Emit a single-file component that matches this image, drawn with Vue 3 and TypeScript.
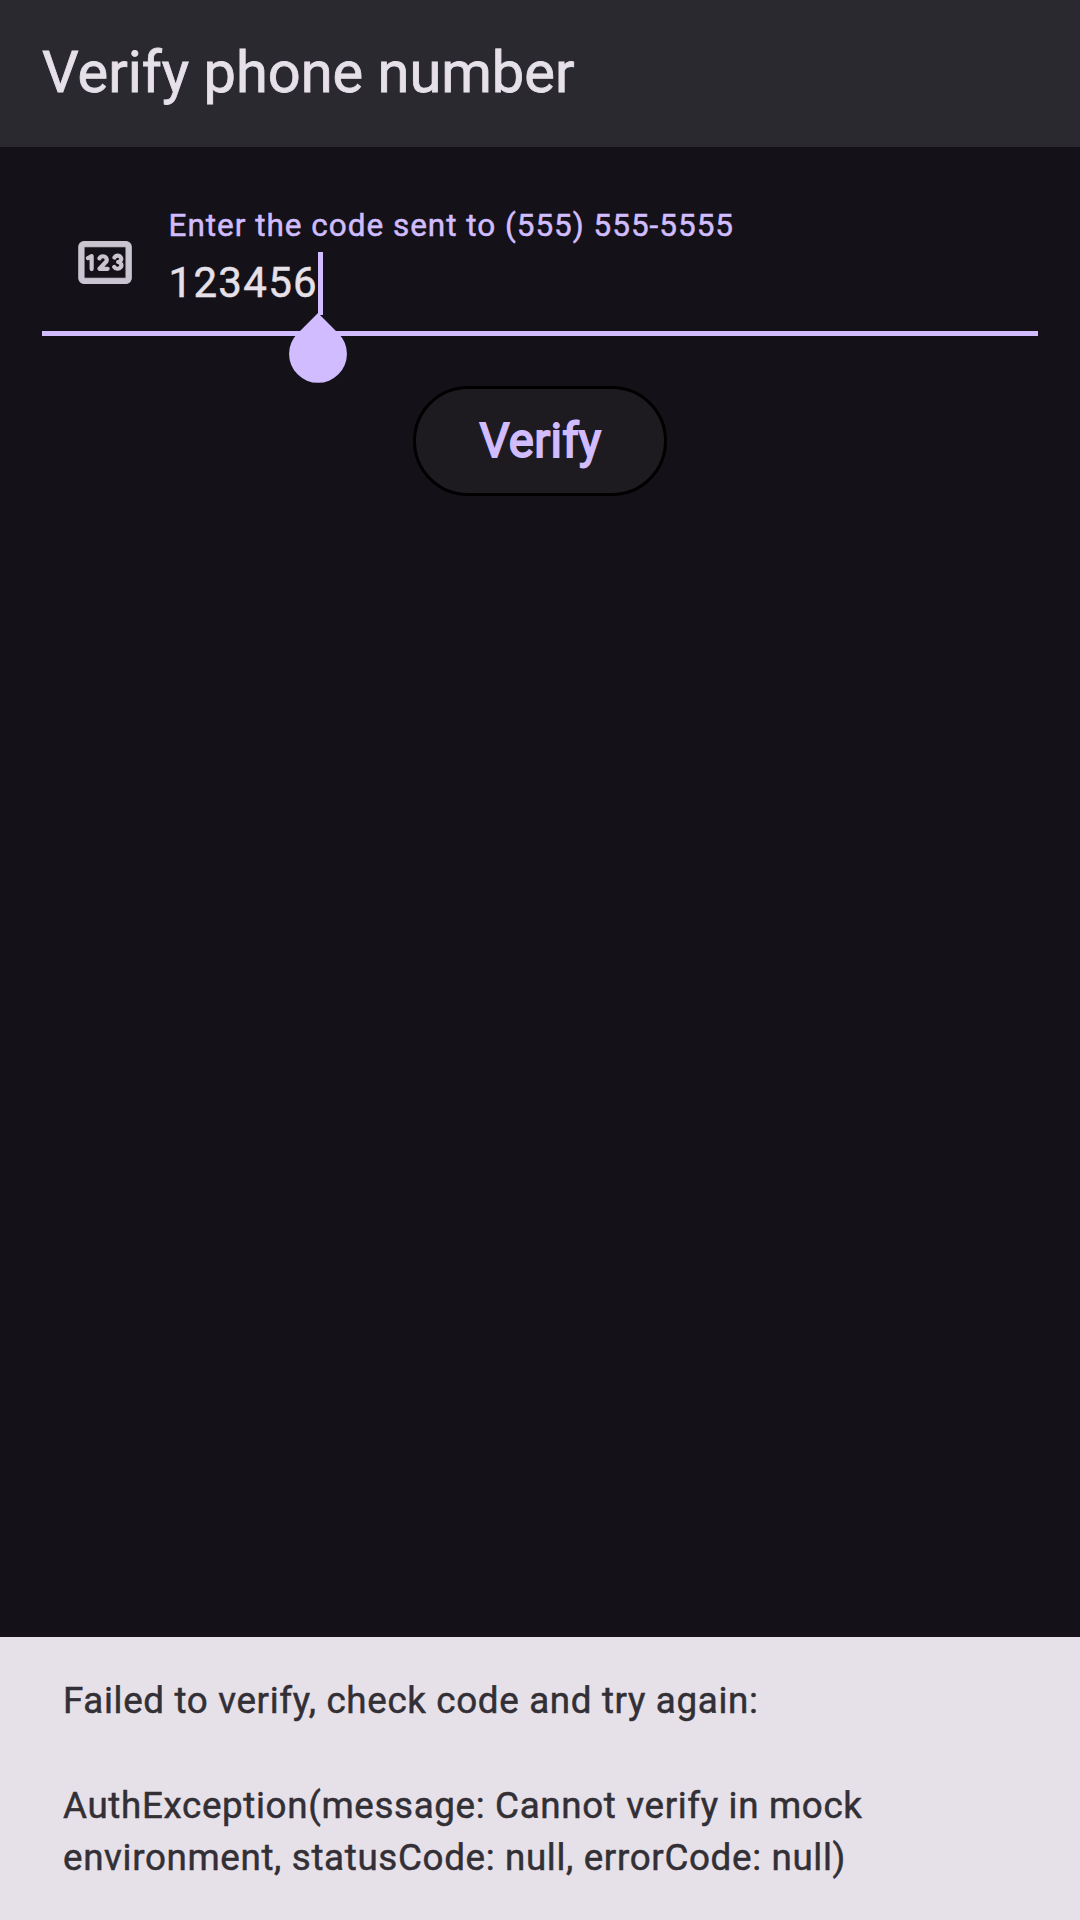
<script setup lang="ts">
import { ref } from 'vue'

const title = 'Verify phone number'
const label = 'Enter the code sent to (555) 555-5555'
const code = ref('123456')
const errorText =
  'Failed to verify, check code and try again:\n\nAuthException(message: Cannot verify in mock environment, statusCode: null, errorCode: null)'
</script>

<template>
  <div class="screen">
    <header class="app-bar">
      <h1 class="title">{{ title }}</h1>
    </header>
    <main class="content">
      <div class="field">
        <svg class="pin-icon" viewBox="-0.2 0 24 24" fill="currentColor">
          <path stroke="currentColor" stroke-width="0.4" d="M20 4H4c-1.11 0-2 .9-2 2v12c0 1.1.89 2 2 2h16c1.1 0 2-.9 2-2V6c0-1.1-.89-2-2-2zm0 14H4V6h16v12z" />
          <g fill="none" stroke="currentColor" stroke-width="1.6" stroke-linecap="round" stroke-linejoin="round">
            <path d="M5.5 10.3 6.9 9.6V14.5" />
            <path d="M9.9 10.4A1.45 1.35 0 1 1 12.5 11.6L9.9 14.4H13" />
            <path d="M15.6 10.1A1.35 1.2 0 1 1 17 11.8A1.45 1.3 0 1 1 15.5 13.7" />
          </g>
        </svg>
        <div class="field-text">
          <span class="label">{{ label }}</span>
          <div class="value">
            <span class="digits">{{ code }}</span>
            <span class="caret">
              <svg class="handle" viewBox="0 0 22 27" fill="currentColor">
                <path d="M11 0 18.78 7.78A11 11 0 1 1 3.22 7.78z" />
              </svg>
            </span>
          </div>
        </div>
      </div>
      <button class="verify" type="button">Verify</button>
    </main>
    <footer class="snackbar">{{ errorText }}</footer>
  </div>
</template>

<style>
body {
  background: #141218;
}
</style>

<style scoped>
.screen {
  display: flex;
  flex-direction: column;
  width: 1080px;
  height: 1920px;
  overflow: hidden;
  background: #141218;
  font-family: Roboto, sans-serif;
  -webkit-text-stroke-width: 0.5px;
}
.app-bar {
  display: flex;
  align-items: center;
  box-sizing: border-box;
  height: 147px;
  padding: 0 42px 3px;
  background: #2b2930;
}
.title {
  margin: 0;
  font-size: 57.75px;
  font-weight: 400;
  line-height: 74px;
  color: #e6e0e9;
  -webkit-text-stroke-width: 0.8px;
}
.content {
  display: flex;
  flex: 1;
  flex-direction: column;
  align-items: center;
  padding: 42px 42px 0;
}
.field {
  display: flex;
  box-sizing: border-box;
  width: 996px;
  height: 147px;
  padding-left: 31px;
  border-bottom: 5px solid #d0bcff;
}
.pin-icon {
  width: 63px;
  height: 63px;
  margin: 42px 32.5px 0 0;
  color: #cac4d0;
}
.field-text {
  display: flex;
  flex-direction: column;
  padding-top: 16px;
}
.label {
  font-size: 31.5px;
  line-height: 42px;
  letter-spacing: 0.98px;
  color: #d0bcff;
  white-space: nowrap;
}
.value {
  display: flex;
  margin-top: 5px;
  font-size: 42px;
  letter-spacing: 1.3125px;
  color: #e6e0e9;
}
.digits {
  height: 63px;
  line-height: 61px;
}
.caret {
  position: relative;
  width: 5px;
  height: 63px;
  margin-left: -0.5px;
  background: #d0bcff;
}
.handle {
  position: absolute;
  top: 61px;
  left: -28.7px;
  width: 58px;
  height: 71px;
  color: #d0bcff;
}
.verify {
  box-sizing: border-box;
  width: 254px;
  height: 110px;
  margin-top: 50px;
  padding: 0 0 0 1px;
  border: 3px solid #000;
  border-radius: 55px;
  background: #1d1b20;
  font-family: inherit;
  font-size: 47.25px;
  font-weight: 400;
  letter-spacing: 0.26px;
  color: #d0bcff;
  -webkit-text-stroke-width: 1.8px;
}
.snackbar {
  box-sizing: border-box;
  height: 283px;
  padding: 37.5px 150px 0 63px;
  background: #e6e0e9;
  font-size: 36.75px;
  line-height: 52.5px;
  letter-spacing: 0.656px;
  color: #322f35;
  white-space: pre-wrap;
}
</style>
